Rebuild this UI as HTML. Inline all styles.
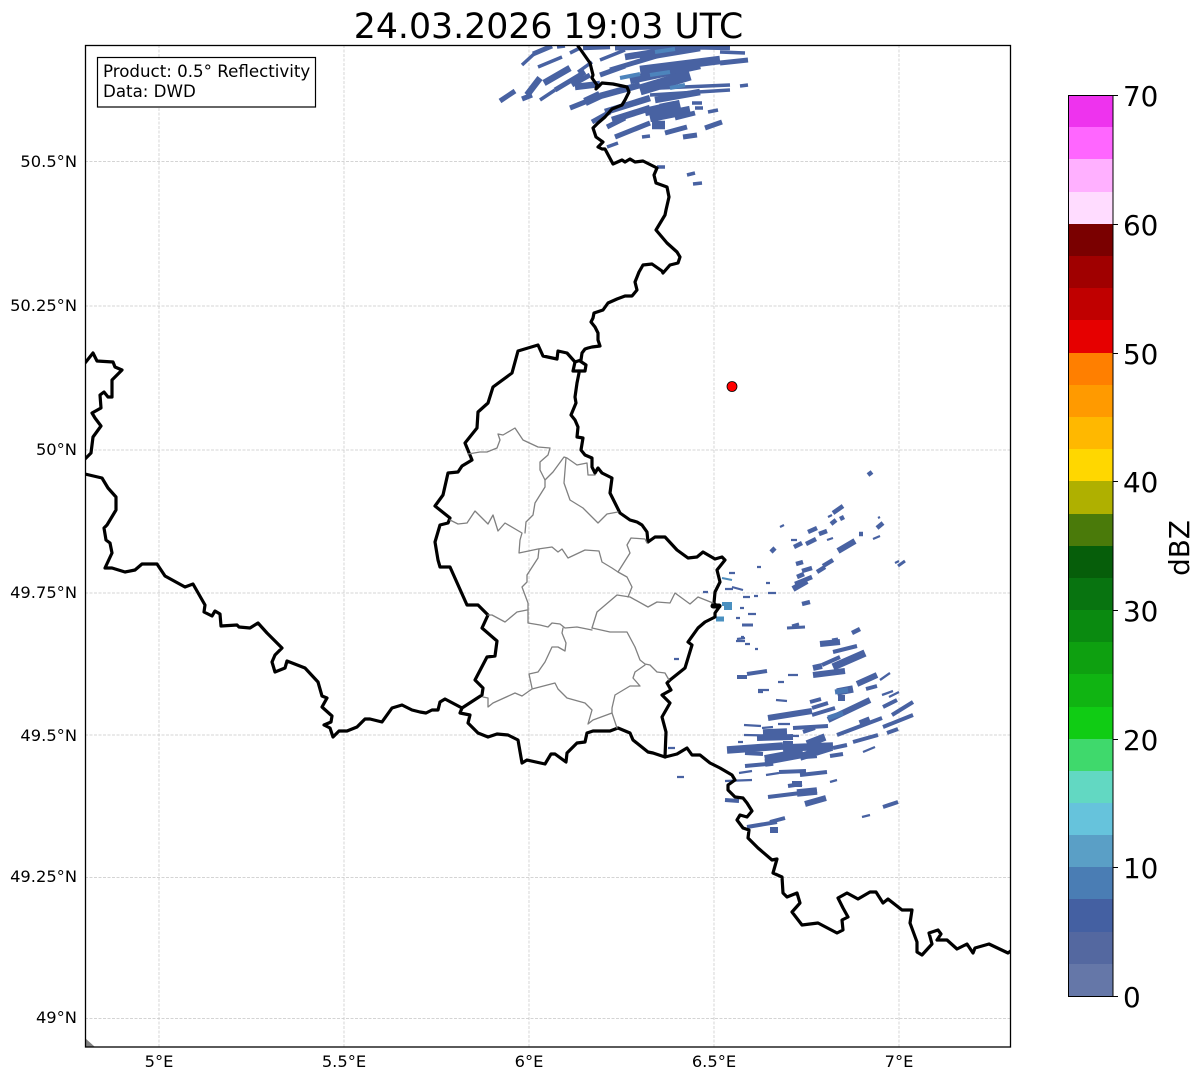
<!DOCTYPE html>
<html>
<head>
<meta charset="utf-8">
<style>
html,body{margin:0;padding:0;background:#fff;width:1202px;height:1081px;overflow:hidden}
svg{display:block}
text{font-family:"DejaVu Sans","Liberation Sans",sans-serif;fill:#000}
.y{font-size:16.300px;text-anchor:end}
.x{font-size:16.300px;text-anchor:middle}
.c{font-size:27.800px}
.b{fill:none;stroke:#000;stroke-width:3.200;stroke-linejoin:round;stroke-linecap:round}
.g{fill:none;stroke:#808080;stroke-width:1.300;stroke-linejoin:round;stroke-linecap:round}
.r{fill:none;stroke:#4862a2}
</style>
</head>
<body>
<svg width="1202" height="1081" viewBox="0 0 1202 1081" xmlns="http://www.w3.org/2000/svg">
<rect width="1202" height="1081" fill="#fff"/>
<clipPath id="ax"><rect x="85" y="45" width="925" height="1002"/></clipPath>
<text x="548.500" y="38" font-size="34.700" text-anchor="middle">24.03.2026 19:03 UTC</text>

<g clip-path="url(#ax)">
<!-- grid -->
<path d="M159 45V1047M344 45V1047M529 45V1047M714 45V1047M899 45V1047M85 161.500H1010M85 306H1010M85 450H1010M85 593H1010M85 735H1010M85 877.500H1010M85 1018.500H1010" fill="none" stroke="#c6c6c6" stroke-width="0.700" stroke-dasharray="3 1.500"/>
<path d="M85 1038L95 1047H85Z" fill="#808080"/>

<!-- radar top -->
<g class="r">
<path stroke-width="3.500" d="M557 47L565 46M570 53L580 48M538 67L562 57M540 100L555 90M578 72L592 62M522 65L534 54M642 137L650 136M692 103L702 103M695 108L703 108M708 112L718 110M740 86L748 85M687 175L695 173M693 184L702 183M657 167L665 167M607 147L618 143M650 95L730 90M660 88L730 85M720 52L745 53M600 60L625 50"/>
<path stroke-width="5" d="M500 101L515 91M522 99L532 95M533 54L552 46M555 90L585 72M570 108L590 100M572 85L590 75M600 75L625 66M610 70L660 55M615 48L700 46M720 63L748 60M592 122L610 112M615 137L650 123M675 118L695 113M665 133L687 127M683 137L697 135M705 128L722 122M607 127L625 118"/>
<path stroke-width="6.500" d="M544 83L570 68M527 95L540 78M583 47L610 46M575 87L600 84M625 57L680 48M640 58L700 48M600 96L640 85M605 112L650 98M612 120L650 108M655 100L700 92M680 46L730 47"/>
<path stroke-width="8.500" d="M585 102L600 95M640 70L720 60M630 80L700 65M645 112L680 104M652 125L665 125M650 118L690 110M660 108L675 105"/>
<path stroke-width="11" d="M640 90L690 75"/>
<path stroke="#4d84bc" stroke-width="4" d="M650 75L670 72M655 52L675 49M620 78L640 74M670 88L685 85"/>

<!-- radar mid -->
<path stroke-width="4.500" d="M868 475L872 472M833 513L843 506M840 519L844 517M808 532L817 528M819 534L827 531M859 534L863 534M877 528L883 523M806 544L816 539M794 547L802 543M771 552L775 548M796 564L803 562M817 572L825 567M823 566L833 560M802 571L812 568M797 577L804 574M795 584L812 577M802 604L810 602M852 633L860 629M831 524L836 520"/>
<path stroke-width="6" d="M838 551L855 541M793 589L807 581"/>
<path stroke-width="2.200" d="M828 517L832 515M780 527L784 525M878 518L880 517M873 539L880 536M827 540L833 538M791 540L797 540M757 567L761 567M895 563L899 561M766 583L770 583M768 593L776 593M743 597L750 597M754 596L758 596M729 573L735 573M732 587L743 590M725 589L733 589M740 608L744 608M748 614L756 614M736 618L740 618M737 639L745 638M741 637L744 637M703 592L708 592"/>
<path stroke-width="3" d="M898 566L905 561M742 625L753 625M787 628L805 627M792 626L799 624M832 640L838 639"/>
<path stroke="#4d8cbc" stroke-width="2" d="M722 578L732 580"/>
<path stroke="#4a90c0" stroke-width="4" d="M722 604L732 604M724 608L732 608"/>
<path stroke="#4a90c0" stroke-width="5" d="M716 619L724 619"/>

<!-- radar lower -->
<path stroke-width="2.300" d="M745 644L750 644M755 649L758 649M758 690L769 690M758 692L763 692M776 700L787 701M882 695L893 691M889 697L899 692M744 725L761 726M762 728L773 727M778 724L790 724M744 735L799 736M738 742L743 742M863 752L875 747M739 773L752 771M766 775L779 773M830 782L837 780M725 781L752 780M862 817L870 815M778 682L784 682M788 675L798 675M880 680L890 673M803 758L817 757M674 659L679 659M668 748L675 748M677 777L684 777M736 641L745 641"/>
<path stroke-width="4" d="M833 652L857 646M822 665L840 657M737 677L747 677M747 674L767 671M866 689L877 686M810 702L821 699M812 708L828 703M883 707L897 700M812 715L835 708M892 715L913 702M883 727L913 715M887 733L898 729M837 735L882 718M793 728L828 726M803 732L815 728M853 742L878 735M833 748L847 745M745 753L763 754M830 756L843 754M745 766L767 764M779 772L806 771M800 775L827 772M788 786L802 784M768 797L817 791M725 800L739 801M883 807L898 802M747 827L777 822M770 822L785 818M783 743L793 743"/>
<path stroke-width="6" d="M820 644L840 642M813 668L822 666M813 675L845 671M857 684L877 675M838 698L845 698M768 718L812 711M828 720L870 700M757 738L793 737M805 804L826 798M770 830L778 830M792 784L802 784"/>
<path stroke-width="7.500" d="M833 667L865 653M837 692L853 689M763 733L787 732M727 750L783 746M783 748L833 746M860 724L870 720M807 744L825 737M800 757L832 747M765 763L773 762M797 793L817 791"/>
<path stroke-width="10" d="M765 760L803 753"/>
<path stroke="#4a78b4" stroke-width="5" d="M828 718L843 713M835 692L848 690"/>
</g>

<!-- country borders -->
<g class="b">
<path d="M578 46L583 53L590 63L593 75L592 78L597 85L596 89L602 83L613 84L627 87L629 92L625 100L622 105L612 109L605 117L598 123L593 128L596 137L603 142L598 147L602 149L605 149L613 164L622 160L625 162L630 159L635 162L643 161L657 168L654 175L656 183L667 187L669 197L666 210L665 215L656 230L667 243L677 252L680 257L678 263L670 265L663 273L662 271L652 264L643 265L639 272L635 282L637 290L632 296L625 296L617 299L608 303L603 310L594 313L593 318L591 322L595 327L598 333L598 340L600 346L592 347L588 348L585 349L582 353L581 360L580 361L586 365L585 371L573 371L575 362L581 360"/>
<path d="M579 371L579 373L577 383L575 397L576 403L571 415L575 420L578 427L577 437L583 438L581 450L585 455L592 458L592 467L595 473L598 468L602 473L612 478L610 493L615 503L620 513L630 520L637 522L642 525L647 532L648 542L655 537L665 537L677 550L688 558L697 557L703 552L715 559L722 557L725 560L717 570L720 582L715 592L714 603L717 607L713 604L720 606L715 613L715 617L705 622L698 628L688 642L692 645L685 668L670 680L667 683L671 690L662 695L670 703L662 717L666 732L665 757"/>
<path d="M575 362L567 353L558 351L557 359L543 356L538 345L518 351L512 373L493 387L488 403L478 412L477 428L465 443L472 460L462 466L458 472L448 473L443 495L435 506L450 518L448 523L440 525L435 542L438 560L440 567L450 567L467 605L478 605L488 615L482 628L497 641L495 656L487 657L475 680L483 688L482 695L462 708L445 699L440 702L438 710L432 710L426 713L420 712L412 710L402 705L392 708L382 722L370 719L365 719L357 727L347 731L339 731L333 737L330 728L324 725L331 722L332 716L322 707L327 698L322 696L318 682L305 668L287 661L285 668L275 672L272 662L275 655L282 648L267 633L258 623L250 628L239 627L237 625L221 626L220 614L215 611L212 616L204 612L205 605L193 584L185 587L165 576L157 564L142 564L135 570L125 572L112 568L105 568L112 553L110 543L106 540L104 528L107 525L116 510L116 497L108 488L102 478L85 474"/>
<path d="M462 708L460 713L470 715L468 723L478 733L488 737L497 734L508 735L518 740L522 763L527 760L545 764L551 754L555 754L566 762L567 753L577 743L585 742L587 733L593 731L610 731L618 728L630 733L633 740L648 752L653 753L665 757L677 754L687 748L692 755L700 755L710 763L720 768L732 775L735 780L728 785L728 790L735 797L743 798L747 803L752 811L747 817L740 815L737 820L743 828L749 830L748 838L758 848L772 860L777 859L773 873L782 877L783 893L787 897L797 893L800 903L792 912L802 925L818 923L837 933L843 930L842 920L848 917L843 908L838 898L847 893L858 899L870 892L876 892L883 903L888 899L902 910L912 910L910 923L917 942L917 952L922 955L932 944L929 933L938 930L941 934L937 940L947 940L957 949L967 944L973 953L975 948L989 944L1008 953L1012 950"/>
<path d="M85 363L93 353L97 361L113 362L115 367L122 370L112 380L112 397L108 397L104 392L100 395L101 408L92 413L95 418L101 426L93 437L91 453L85 459"/>
<path stroke-width="5" d="M713 606L719 606"/>
</g>

<!-- Lux cantons -->
<g class="g">
<path d="M468 454L480 452L487 452L497 448L500 440L498 434L503 435L515 428L523 440L538 447L550 448L548 455L540 462L540 470L545 480L545 487L535 503L533 515L526 522L525 533"/>
<path d="M545 480L553 472L564 457L567 458L577 465L587 463L588 475L595 475"/>
<path d="M566 458L564 483L570 500L583 508L598 523L607 514L618 512"/>
<path d="M450 520L458 524L467 523L475 511L488 524L493 515L498 531L505 523L522 533L520 540L519 553L538 549L552 547L558 552L562 549L568 558L585 550L599 551L602 562L612 568L618 572L627 577L632 587L628 597"/>
<path d="M618 572L630 553L627 545L631 538L645 539L647 543"/>
<path d="M539 549L538 558L527 575L527 582L522 587L528 603L528 623L540 625L548 627L552 623L560 624L565 628L577 627L592 630"/>
<path d="M592 628L597 612L617 595L630 597L648 607L657 602L670 603L675 593L690 604L698 597L713 603"/>
<path d="M527 610L517 612L505 622L492 615L488 615"/>
<path d="M563 628L562 633L566 643L565 651L558 647L552 647L545 662L538 672L529 674L532 688"/>
<path d="M483 697L488 698L488 707L493 703L515 693L522 696L532 689L555 683L558 689L567 698L585 703L592 710L588 724L593 720L612 713L617 728"/>
<path d="M592 628L610 632L627 632L635 647L640 660L645 664L650 665L657 672L665 673L669 680"/>
<path d="M645 665L635 672L633 678L640 686L630 686L615 695L612 708L612 713"/>
</g>

<circle cx="732" cy="386.500" r="5" fill="#f00" stroke="#000" stroke-width="0.800"/>
</g>

<!-- axes frame -->
<rect x="85.500" y="45.500" width="925" height="1001.500" fill="none" stroke="#000" stroke-width="1.300"/>

<!-- info box -->
<rect x="97.500" y="57.500" width="218" height="49.500" fill="#fff" stroke="#000" stroke-width="1.200"/>
<text x="103" y="77" font-size="16.670">Product: 0.5° Reflectivity</text>
<text x="103" y="97" font-size="16.670">Data: DWD</text>

<!-- lat labels -->
<text class="y" x="77" y="167">50.5°N</text>
<text class="y" x="77" y="311">50.25°N</text>
<text class="y" x="77" y="455">50°N</text>
<text class="y" x="77" y="598">49.75°N</text>
<text class="y" x="77" y="741">49.5°N</text>
<text class="y" x="77" y="882">49.25°N</text>
<text class="y" x="77" y="1023">49°N</text>

<!-- lon labels -->
<text class="x" x="159" y="1067">5°E</text>
<text class="x" x="344" y="1067">5.5°E</text>
<text class="x" x="529" y="1067">6°E</text>
<text class="x" x="714" y="1067">6.5°E</text>
<text class="x" x="899" y="1067">7°E</text>

<!-- colorbar -->
<g shape-rendering="crispEdges">
<rect x="1068" y="95" width="45" height="33" fill="#ee33ee"/>
<rect x="1068" y="127" width="45" height="33" fill="#ff66ff"/>
<rect x="1068" y="159" width="45" height="33" fill="#ffb0ff"/>
<rect x="1068" y="192" width="45" height="33" fill="#ffdcff"/>
<rect x="1068" y="224" width="45" height="33" fill="#7a0000"/>
<rect x="1068" y="256" width="45" height="33" fill="#a00000"/>
<rect x="1068" y="288" width="45" height="33" fill="#c00000"/>
<rect x="1068" y="320" width="45" height="33" fill="#e60000"/>
<rect x="1068" y="353" width="45" height="33" fill="#ff7f00"/>
<rect x="1068" y="385" width="45" height="33" fill="#ff9a00"/>
<rect x="1068" y="417" width="45" height="33" fill="#ffb800"/>
<rect x="1068" y="449" width="45" height="33" fill="#ffd700"/>
<rect x="1068" y="481" width="45" height="33" fill="#afb000"/>
<rect x="1068" y="514" width="45" height="33" fill="#4a7a0a"/>
<rect x="1068" y="546" width="45" height="33" fill="#065e0a"/>
<rect x="1068" y="578" width="45" height="33" fill="#087410"/>
<rect x="1068" y="610" width="45" height="33" fill="#0a8a10"/>
<rect x="1068" y="642" width="45" height="33" fill="#0ea010"/>
<rect x="1068" y="674" width="45" height="33" fill="#10b412"/>
<rect x="1068" y="707" width="45" height="33" fill="#10cc14"/>
<rect x="1068" y="739" width="45" height="33" fill="#3fd96c"/>
<rect x="1068" y="771" width="45" height="33" fill="#62d8c2"/>
<rect x="1068" y="803" width="45" height="33" fill="#66c3dc"/>
<rect x="1068" y="835" width="45" height="33" fill="#5a9fc6"/>
<rect x="1068" y="867" width="45" height="33" fill="#4a7db4"/>
<rect x="1068" y="899" width="45" height="33" fill="#4460a2"/>
<rect x="1068" y="932" width="45" height="33" fill="#5468a0"/>
<rect x="1068" y="964" width="45" height="33" fill="#6577a8"/>
</g>
<rect x="1068.500" y="95.500" width="44.500" height="901" fill="none" stroke="#000" stroke-width="1"/>
<path d="M1113 95.500h5M1113 224.500h5M1113 353.500h5M1113 481.500h5M1113 610.500h5M1113 739.500h5M1113 867.500h5M1113 996.500h5" stroke="#000" stroke-width="1"/>
<text class="c" x="1123" y="106">70</text>
<text class="c" x="1123" y="235">60</text>
<text class="c" x="1123" y="364">50</text>
<text class="c" x="1123" y="492">40</text>
<text class="c" x="1123" y="621">30</text>
<text class="c" x="1123" y="750">20</text>
<text class="c" x="1123" y="878">10</text>
<text class="c" x="1123" y="1007">0</text>
<text class="c" transform="translate(1189 548) rotate(-90)" text-anchor="middle">dBZ</text>
</svg>
</body>
</html>
